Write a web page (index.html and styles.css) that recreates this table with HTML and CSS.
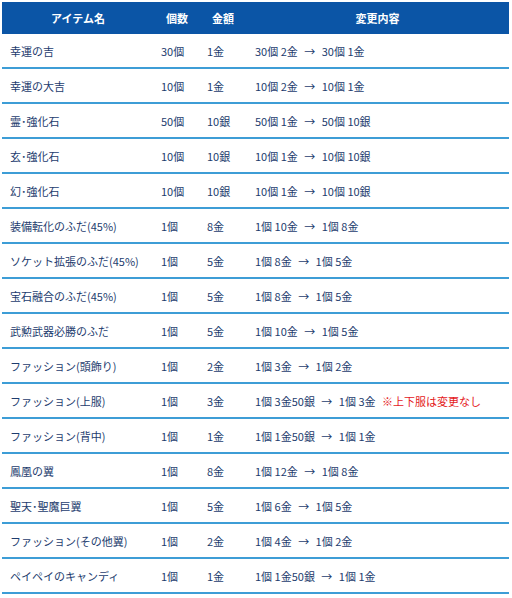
FILE: index.html
```html
<!DOCTYPE html>
<html lang="ja">
<head>
<meta charset="utf-8">
<link rel="stylesheet" href="styles.css">
</head>
<body>
<table class="price-table">
  <colgroup>
    <col class="c-name"><col class="c-qty"><col class="c-price"><col class="c-change">
  </colgroup>
  <thead>
    <tr><th>アイテム名</th><th>個数</th><th>金額</th><th>変更内容</th></tr>
  </thead>
  <tbody>
    <tr><td>幸運の吉</td><td>30個</td><td>1金</td><td>30個 2金 <span class="arr">→</span> 30個 1金</td></tr>
    <tr><td>幸運の大吉</td><td>10個</td><td>1金</td><td>10個 2金 <span class="arr">→</span> 10個 1金</td></tr>
    <tr><td>霊･強化石</td><td>50個</td><td>10銀</td><td>50個 1金 <span class="arr">→</span> 50個 10銀</td></tr>
    <tr><td>玄･強化石</td><td>10個</td><td>10銀</td><td>10個 1金 <span class="arr">→</span> 10個 10銀</td></tr>
    <tr><td>幻･強化石</td><td>10個</td><td>10銀</td><td>10個 1金 <span class="arr">→</span> 10個 10銀</td></tr>
    <tr><td>装備転化のふだ(45%)</td><td>1個</td><td>8金</td><td>1個 10金 <span class="arr">→</span> 1個 8金</td></tr>
    <tr><td>ソケット拡張のふだ(45%)</td><td>1個</td><td>5金</td><td>1個 8金 <span class="arr">→</span> 1個 5金</td></tr>
    <tr><td>宝石融合のふだ(45%)</td><td>1個</td><td>5金</td><td>1個 8金 <span class="arr">→</span> 1個 5金</td></tr>
    <tr><td>武勲武器必勝のふだ</td><td>1個</td><td>5金</td><td>1個 10金 <span class="arr">→</span> 1個 5金</td></tr>
    <tr><td>ファッション(頭飾り)</td><td>1個</td><td>2金</td><td>1個 3金 <span class="arr">→</span> 1個 2金</td></tr>
    <tr><td>ファッション(上服)</td><td>1個</td><td>3金</td><td>1個 3金50銀 <span class="arr">→</span> 1個 3金 <span class="note">※上下服は変更なし</span></td></tr>
    <tr><td>ファッション(背中)</td><td>1個</td><td>1金</td><td>1個 1金50銀 <span class="arr">→</span> 1個 1金</td></tr>
    <tr><td>鳳凰の翼</td><td>1個</td><td>8金</td><td>1個 12金 <span class="arr">→</span> 1個 8金</td></tr>
    <tr><td>聖天･聖魔巨翼</td><td>1個</td><td>5金</td><td>1個 6金 <span class="arr">→</span> 1個 5金</td></tr>
    <tr><td>ファッション(その他翼)</td><td>1個</td><td>2金</td><td>1個 4金 <span class="arr">→</span> 1個 2金</td></tr>
    <tr><td>ペイペイのキャンディ</td><td>1個</td><td>1金</td><td>1個 1金50銀 <span class="arr">→</span> 1個 1金</td></tr>
  </tbody>
</table>
</body>
</html>
```

FILE: styles.css
```css
html, body {
  margin: 0;
  padding: 0;
  background: #ffffff;
}

body {
  padding: 2px 3px 0 2px;
  font-family: "Noto Sans CJK JP", "Noto Sans", sans-serif;
  font-size: 11px;
  color: #1d3c6e;
}

.price-table {
  width: 507px;
  border-collapse: collapse;
  border-spacing: 0;
  table-layout: fixed;
}

.c-name { width: 152px; }
.c-qty { width: 46px; }
.c-price { width: 46px; }
.c-change { width: 263px; }

.price-table thead tr {
  background-color: #0b55a6;
}

.price-table th {
  height: 32px;
  padding: 0;
  color: #ffffff;
  font-weight: bold;
  font-size: 11px;
  text-align: center;
  background: transparent;
}

.price-table td {
  height: 33px;
  padding: 0 0 0 8px;
  border-bottom: 2px solid #3d9dd6;
  white-space: nowrap;
  vertical-align: middle;
}

.price-table td:nth-child(2),
.price-table td:nth-child(3) {
  padding-left: 7px;
}

.price-table td:nth-child(4) {
  padding-left: 9px;
}

.arr {
  margin: 0 4px;
}

.note {
  color: #e4201c;
  margin-left: 4px;
}
```
